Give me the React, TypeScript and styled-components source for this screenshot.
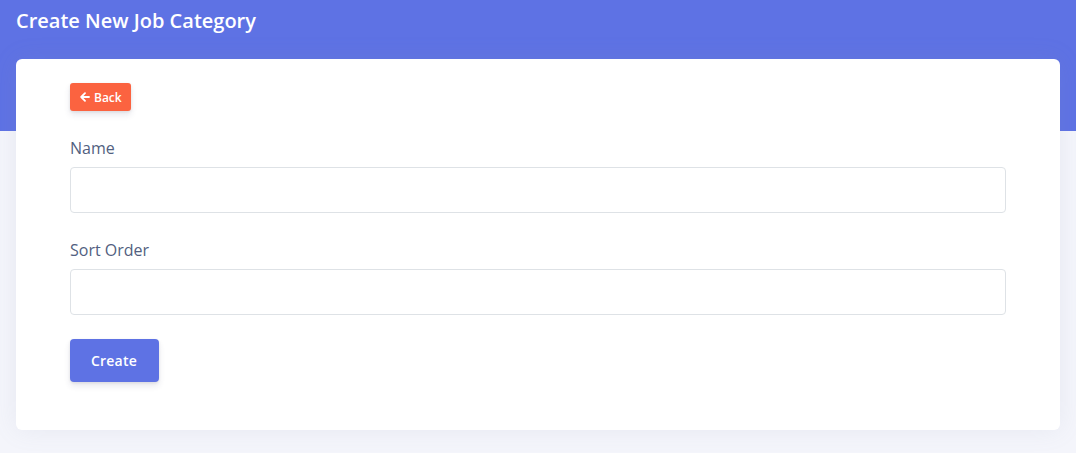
import styled, { createGlobalStyle } from "styled-components"

const Global = createGlobalStyle`
  * { box-sizing: border-box; }
  body {
    margin: 0;
    background: #f4f5fb;
    font-family: "Open Sans", "Liberation Sans", sans-serif;
  }
`

const Page = styled.div`
  min-height: 453px;
`

const Header = styled.div`
  background: #5e72e4;
  height: 131px;
  padding: 7px 16px 0;
`

const Title = styled.h1`
  margin: 0;
  color: #fff;
  font-size: 20px;
  font-weight: 600;
  line-height: 28px;
`

const Content = styled.div`
  margin: -72px 16px 0;
  padding-bottom: 23px;
`

const Card = styled.div`
  background: #fff;
  border-radius: 6px;
  box-shadow: 0 0 24px rgba(136, 152, 170, 0.12);
  padding: 24px 54px 48px;
`

const BackButton = styled.button`
  display: inline-flex;
  align-items: center;
  gap: 4px;
  height: 28px;
  padding: 0 9px 0 10px;
  border: none;
  border-radius: 3px;
  background: #fb6340;
  color: #fff;
  font-family: inherit;
  font-size: 12px;
  font-weight: 600;
  box-shadow: 0 4px 6px rgba(50, 50, 93, 0.11), 0 1px 3px rgba(0, 0, 0, 0.08);
`

const Field = styled.div`
  margin-top: 25px;
`

const Label = styled.label`
  display: block;
  color: #525f7f;
  font-size: 16px;
  line-height: 24px;
  margin-bottom: 7px;
`

const Input = styled.input`
  display: block;
  width: 100%;
  height: 46px;
  border: 1px solid #dee2e6;
  border-radius: 4px;
  background: #fff;
  font-family: inherit;
  font-size: 14px;
  padding: 0 12px;
  outline: none;
`

const SubmitButton = styled.button`
  margin-top: 24px;
  height: 43px;
  padding: 0 22px 0 21px;
  border: none;
  border-radius: 4px;
  background: #5e72e4;
  color: #fff;
  font-family: inherit;
  font-size: 14px;
  font-weight: 600;
  letter-spacing: 0.2px;
  box-shadow: 0 4px 6px rgba(50, 50, 93, 0.11), 0 1px 3px rgba(0, 0, 0, 0.08);
`

const ArrowLeft = () => (
  <svg width="10" height="10" viewBox="0 0 10 10" fill="none" stroke="#fff" strokeWidth="1.8" strokeLinecap="round" strokeLinejoin="round">
    <path d="M9 5H1.5M5 1.2L1.2 5L5 8.8" />
  </svg>
)

export default function App() {
  return (
    <Page>
      <Global />
      <Header>
        <Title>Create New Job Category</Title>
      </Header>
      <Content>
        <Card>
          <BackButton>
            <ArrowLeft />
            Back
          </BackButton>
          <Field>
            <Label>Name</Label>
            <Input />
          </Field>
          <Field>
            <Label>Sort Order</Label>
            <Input />
          </Field>
          <SubmitButton>Create</SubmitButton>
        </Card>
      </Content>
    </Page>
  )
}
